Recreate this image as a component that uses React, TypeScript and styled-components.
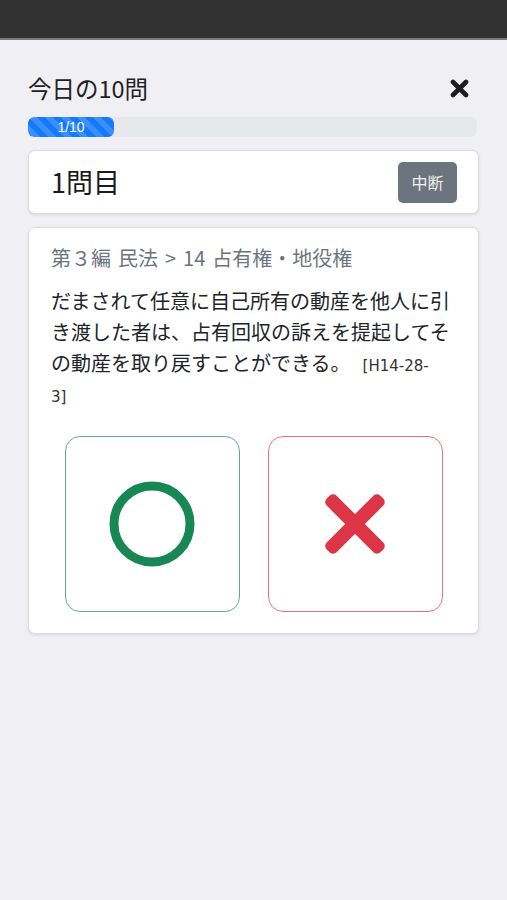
import React from "react";
import styled, { createGlobalStyle } from "styled-components";

const GlobalStyle = createGlobalStyle`
  html, body {
    margin: 0;
    padding: 0;
    background: #efeff4;
  }
  body {
    font-family: "Noto Sans CJK JP", "Noto Sans", "Liberation Sans", sans-serif;
    color: #212529;
    min-height: 900px;
  }
  * { box-sizing: border-box; }
`;

const TopBar = styled.div`
  height: 40px;
  background: #323232;
  border-bottom: 2px solid #7c7c7c;
`;

const Main = styled.main`
  padding: 0 28px 0 28px;
`;

const Header = styled.div`
  margin-top: 34px;
  height: 28px;
  display: flex;
  align-items: center;
  justify-content: space-between;
`;

const Title = styled.h1`
  margin: 0;
  font-size: 23.5px;
  font-weight: 400;
  line-height: 28px;
  color: #222;
`;

const CloseButton = styled.button`
  border: none;
  background: transparent;
  padding: 0 10px 0 0;
  display: flex;
  align-items: center;
  cursor: pointer;
`;

const Progress = styled.div`
  margin-top: 15px;
  height: 20px;
  border-radius: 6px;
  background: #e7e8ec;
  overflow: hidden;
  display: flex;
  margin-right: 2px;
`;

const ProgressBar = styled.div`
  height: 100%;
  background-color: #1479fb;
  background-image: linear-gradient(
    45deg,
    rgba(255, 255, 255, 0.16) 25%,
    transparent 25%,
    transparent 50%,
    rgba(255, 255, 255, 0.16) 50%,
    rgba(255, 255, 255, 0.16) 75%,
    transparent 75%,
    transparent
  );
  background-size: 16px 16px;
  border-radius: 6px;
  color: #fff;
  font-family: "Liberation Sans", "Noto Sans", sans-serif;
  font-size: 14px;
  line-height: 20px;
  text-align: center;
`;

const Card = styled.section`
  margin-top: 13px;
  background: #fff;
  border: 1px solid #dcdde1;
  border-radius: 7px;
  box-shadow: 0 1px 3px rgba(0, 0, 0, 0.1);
`;

const CountCard = styled(Card)`
  height: 64px;
  display: flex;
  align-items: center;
  justify-content: space-between;
  padding: 0 21px 0 22px;
`;

const CountText = styled.div`
  font-size: 27px;
  line-height: 32px;
  color: #1c1c1c;
  font-family: "Noto Sans CJK JP", sans-serif;
`;

const SuspendButton = styled.button`
  width: 59px;
  height: 41px;
  border: none;
  border-radius: 5px;
  background: #6c757d;
  color: #f1f1f1;
  font-family: "Noto Sans CJK JP", sans-serif;
  font-size: 16px;
  padding: 0;
  cursor: pointer;
`;

const QuestionCard = styled(Card)`
  padding: 17px 22px 21px 22px;
`;

const Category = styled.div`
  font-size: 20px;
  line-height: 26px;
  color: #6c757d;
  white-space: nowrap;
  word-spacing: 2.5px;
`;

const Body = styled.p`
  margin: 14px 0 0 0;
  font-size: 20px;
  line-height: 31px;
  color: #212529;
`;

const Ref = styled.span`
  font-family: "DejaVu Sans", sans-serif;
  font-size: 15px;
  line-height: 18px;
  margin-left: 12px;
  color: #333;
`;

const Choices = styled.div`
  margin-top: 27px;
  display: flex;
  justify-content: center;
  gap: 28px;
`;

const ChoiceButton = styled.button<{ $color: string }>`
  width: 175px;
  height: 176px;
  background: #fff;
  border: 1px solid ${(p) => p.$color};
  border-radius: 15px;
  display: flex;
  align-items: center;
  justify-content: center;
  padding: 0;
  cursor: pointer;
`;

const CloseIcon = () => (
  <svg width="19" height="19" viewBox="0 0 19 19">
    <path
      d="M3 3 L16 16 M16 3 L3 16"
      stroke="#1d1d1d"
      strokeWidth="4.6"
      strokeLinecap="round"
    />
  </svg>
);

const CircleIcon = () => (
  <svg width="86" height="86" viewBox="0 0 86 86">
    <circle cx="43" cy="43" r="38" fill="none" stroke="#198754" strokeWidth="9" />
  </svg>
);

const CrossIcon = () => (
  <svg width="62" height="62" viewBox="0 0 62 62">
    <g fill="#dc3545" transform="rotate(45 31 31)">
      <rect x="-7" y="24" width="76" height="14" rx="5" />
      <rect x="24" y="-7" width="14" height="76" rx="5" />
    </g>
  </svg>
);

export default function App() {
  return (
    <>
      <GlobalStyle />
      <TopBar />
      <Main>
        <Header>
          <Title>今日の10問</Title>
          <CloseButton aria-label="閉じる">
            <CloseIcon />
          </CloseButton>
        </Header>
        <Progress>
          <ProgressBar style={{ width: "86px" }}>1/10</ProgressBar>
        </Progress>
        <CountCard>
          <CountText>1問目</CountText>
          <SuspendButton>中断</SuspendButton>
        </CountCard>
        <QuestionCard>
          <Category>第３編 民法 &gt; 14 占有権・地役権</Category>
          <Body>
            だまされて任意に自己所有の動産を他人に引き渡した者は、占有回収の訴えを提起してその動産を取り戻すことができる。
            <Ref>
              [H14-28-
              <br />
              3]
            </Ref>
          </Body>
          <Choices>
            <ChoiceButton $color="#5eae8a" aria-label="正しい">
              <CircleIcon />
            </ChoiceButton>
            <ChoiceButton $color="#e5737d" aria-label="誤り">
              <CrossIcon />
            </ChoiceButton>
          </Choices>
        </QuestionCard>
      </Main>
    </>
  );
}
